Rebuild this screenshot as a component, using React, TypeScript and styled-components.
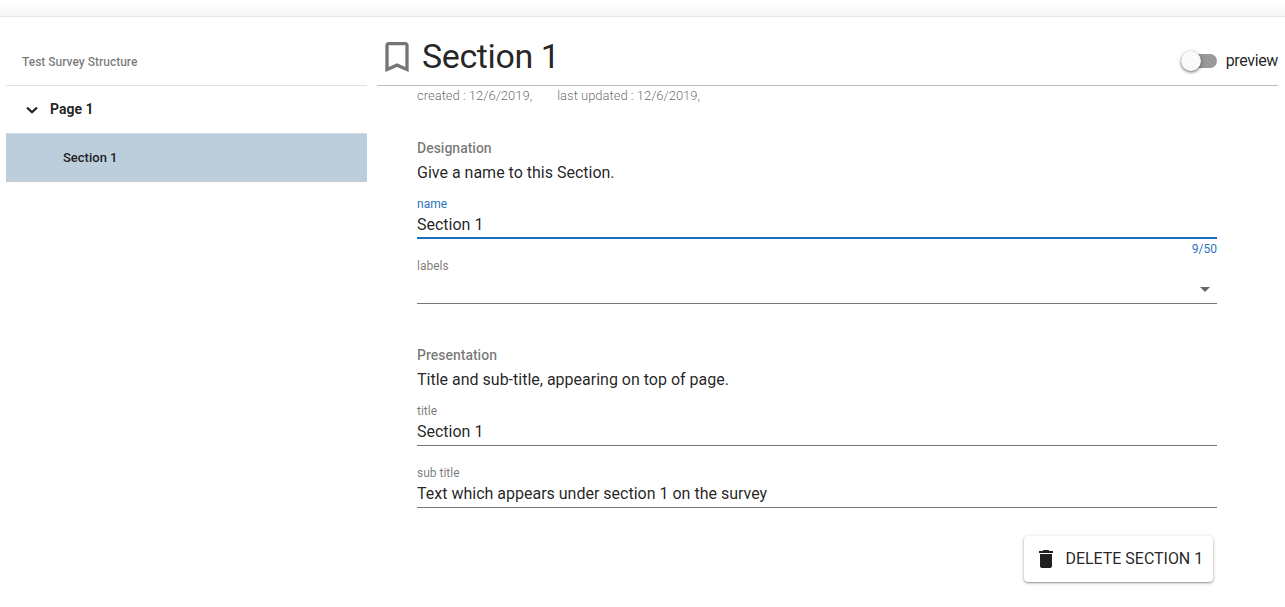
import React from "react";
import styled, { createGlobalStyle } from "styled-components";

const GlobalStyle = createGlobalStyle`
  * { box-sizing: border-box; }
  body {
    margin: 0;
    background: #fff;
    color: rgba(0, 0, 0, 0.87);
    font-family: Roboto, sans-serif;
    font-size: 16px;
    overflow: hidden;
  }
`;

const Page = styled.div`
  height: 607px;
  display: flex;
  flex-direction: column;
`;

const TopShade = styled.div`
  flex: none;
  height: 17px;
  border-bottom: 1px solid #e6e6e6;
  background: linear-gradient(#fff, #fdfdfd 40%, #f5f5f5);
`;

const Columns = styled.div`
  flex: 1;
  display: flex;
  gap: 10px;
  padding: 0 7px 0 6px;
`;

const Sidebar = styled.nav`
  width: 361px;
  flex: none;
`;

const SidebarTitle = styled.div`
  height: 69px;
  padding: 21px 16px 0;
  border-bottom: 1px solid #e0e0e0;
  font-size: 12px;
  line-height: 48px;
  font-weight: 500;
  color: rgba(0, 0, 0, 0.54);
`;

const TreeRow = styled.div<{ $selected?: boolean }>`
  display: flex;
  align-items: center;
  height: ${(p) => (p.$selected ? 49 : 47)}px;
  padding-left: ${(p) => (p.$selected ? 57 : 18)}px;
  padding-bottom: ${(p) => (p.$selected ? 0 : 1)}px;
  gap: 10px;
  font-weight: ${(p) => (p.$selected ? 500 : 700)};
  font-size: ${(p) => (p.$selected ? 13 : 14)}px;
  background: ${(p) => (p.$selected ? "#bccddb" : "#fff")};
  border-top: ${(p) => (p.$selected ? "1px solid #d3dbe1" : "none")};
  border-bottom: ${(p) => (p.$selected ? "1px solid #c4cdd4" : "none")};
`;

const Main = styled.main`
  flex: 1;
`;

const Header = styled.header`
  display: flex;
  align-items: center;
  height: 69px;
  padding-top: 11px;
  border-bottom: 1px solid #bdbdbd;
`;

const HeaderIcon = styled.svg`
  width: 40px;
  height: 40px;
  margin-right: 5px;
  fill: #757575;
`;

const Title = styled.h1`
  flex: 1;
  margin: 0;
  padding-bottom: 2px;
  font-size: 34px;
  line-height: 40px;
  font-weight: 400;
  letter-spacing: -0.4px;
`;

const Toggle = styled.div`
  display: flex;
  align-items: center;
  gap: 9px;
  padding-top: 9px;
  line-height: 20px;
  letter-spacing: -0.35px;
`;

const Track = styled.div`
  display: flex;
  align-items: center;
  width: 36px;
  height: 14px;
  border-radius: 7px;
  background: #999;
`;

const Thumb = styled.div`
  width: 20px;
  height: 20px;
  border-radius: 50%;
  background: #fafafa;
  box-shadow: 0 1px 3px rgba(0, 0, 0, 0.3), 0 2px 2px rgba(0, 0, 0, 0.14), 0 1px 5px rgba(0, 0, 0, 0.2);
`;

const Content = styled.div`
  width: 800px;
  margin-left: 40px;
`;

const Dates = styled.div`
  display: flex;
  gap: 25px;
  height: 52px;
  padding-top: 2px;
  font-size: 13px;
  line-height: 16px;
  font-weight: 300;
  color: rgba(0, 0, 0, 0.62);
`;

const Group = styled.section<{ $last?: boolean }>`
  margin-bottom: ${(p) => (p.$last ? 8 : 24)}px;
`;

const GroupTitle = styled.h2`
  margin: 0;
  font-size: 14px;
  line-height: 20px;
  font-weight: 500;
  color: rgba(0, 0, 0, 0.54);
`;

const GroupText = styled.p`
  margin: 3px 0 12px;
  line-height: 24px;
`;

const Field = styled.div<{ $active?: boolean }>`
  height: 62px;
  color: ${(p) => (p.$active ? "#2a74bf" : "rgba(0, 0, 0, 0.54)")};
  font-size: 12px;
`;

const Label = styled.div`
  line-height: 14px;
`;

const Value = styled.div<{ $active?: boolean; $select?: boolean }>`
  display: flex;
  align-items: center;
  justify-content: space-between;
  height: ${(p) => (p.$select ? 31 : 28)}px;
  padding-top: ${(p) => (p.$active ? 1 : p.$select ? 3 : 2)}px;
  padding-bottom: ${(p) => (p.$active ? 0 : 1)}px;
  border-bottom: ${(p) => (p.$active ? "2px solid #1c6fba" : "1px solid #757575")};
  font-size: 16px;
  line-height: 24px;
  color: rgba(0, 0, 0, 0.87);
`;

const Counter = styled.div`
  padding-top: 3px;
  text-align: right;
  line-height: 14px;
`;

const Caret = styled.svg`
  width: 24px;
  height: 24px;
  fill: #666;
`;

const Actions = styled.div`
  display: flex;
  justify-content: flex-end;
  padding-right: 4px;
`;

const DeleteButton = styled.button`
  display: flex;
  align-items: center;
  gap: 8px;
  width: 189px;
  height: 46px;
  padding: 0 0 0 10px;
  border: 0;
  border-radius: 4px;
  background: #fff;
  color: rgba(0, 0, 0, 0.87);
  font: 400 16px Roboto, sans-serif;
  white-space: nowrap;
  box-shadow: 0 1px 2px rgba(0, 0, 0, 0.36), 0 1px 5px rgba(0, 0, 0, 0.12);
`;

const ButtonLabel = styled.span`
  margin-left: -0.5px;
  padding-bottom: 2px;
  letter-spacing: -0.03px;
`;

const ButtonIcon = styled.svg`
  flex: none;
  width: 24px;
  height: 24px;
  fill: #212121;
`;

const Chevron = styled.svg`
  width: 16px;
  height: 16px;
  fill: #212121;
`;

export default function App() {
  return (
    <>
      <GlobalStyle />
      <Page>
        <TopShade />
        <Columns>
          <Sidebar>
            <SidebarTitle>Test Survey Structure</SidebarTitle>
            <TreeRow>
              <Chevron viewBox="0 0 16 16">
                <path d="M3.800 5.800 8 9.700l4.200-3.900 1.400 1.600L8 12.800 2.400 7.400z" />
              </Chevron>
              Page 1
            </TreeRow>
            <TreeRow $selected>Section 1</TreeRow>
          </Sidebar>
          <Main>
            <Header>
              <HeaderIcon viewBox="0 0 24 24">
                <path d="M17 3H7c-1.1 0-1.99.9-1.99 2L5 21l7-3 7 3V5c0-1.100-.9-2-2-2zm0 15-5-2.180L7 18V5h10v13z" />
              </HeaderIcon>
              <Title>Section 1</Title>
              <Toggle>
                <Track>
                  <Thumb />
                </Track>
                preview
              </Toggle>
            </Header>
            <Content>
              <Dates>
                <span>created : 12/6/2019,</span>
                <span>last updated : 12/6/2019,</span>
              </Dates>
              <Group>
                <GroupTitle>Designation</GroupTitle>
                <GroupText>Give a name to this Section.</GroupText>
                <Field $active>
                  <Label>name</Label>
                  <Value $active>Section 1</Value>
                  <Counter>9/50</Counter>
                </Field>
                <Field>
                  <Label>labels</Label>
                  <Value $select>
                    <span />
                    <Caret viewBox="0 0 24 24">
                      <path d="m7 10 5 5 5-5z" />
                    </Caret>
                  </Value>
                </Field>
              </Group>
              <Group $last>
                <GroupTitle>Presentation</GroupTitle>
                <GroupText>Title and sub-title, appearing on top of page.</GroupText>
                <Field>
                  <Label>title</Label>
                  <Value>Section 1</Value>
                </Field>
                <Field>
                  <Label>sub title</Label>
                  <Value>Text which appears under section 1 on the survey</Value>
                </Field>
              </Group>
              <Actions>
                <DeleteButton>
                  <ButtonIcon viewBox="0 0 24 24">
                    <path d="M6 19c0 1.100.9 2 2 2h8c1.100 0 2-.9 2-2V7H6v12zM19 4h-3.500l-1-1h-5l-1 1H5v2h14V4z" />
                  </ButtonIcon>
                  <ButtonLabel>DELETE SECTION 1</ButtonLabel>
                </DeleteButton>
              </Actions>
            </Content>
          </Main>
        </Columns>
      </Page>
    </>
  );
}
